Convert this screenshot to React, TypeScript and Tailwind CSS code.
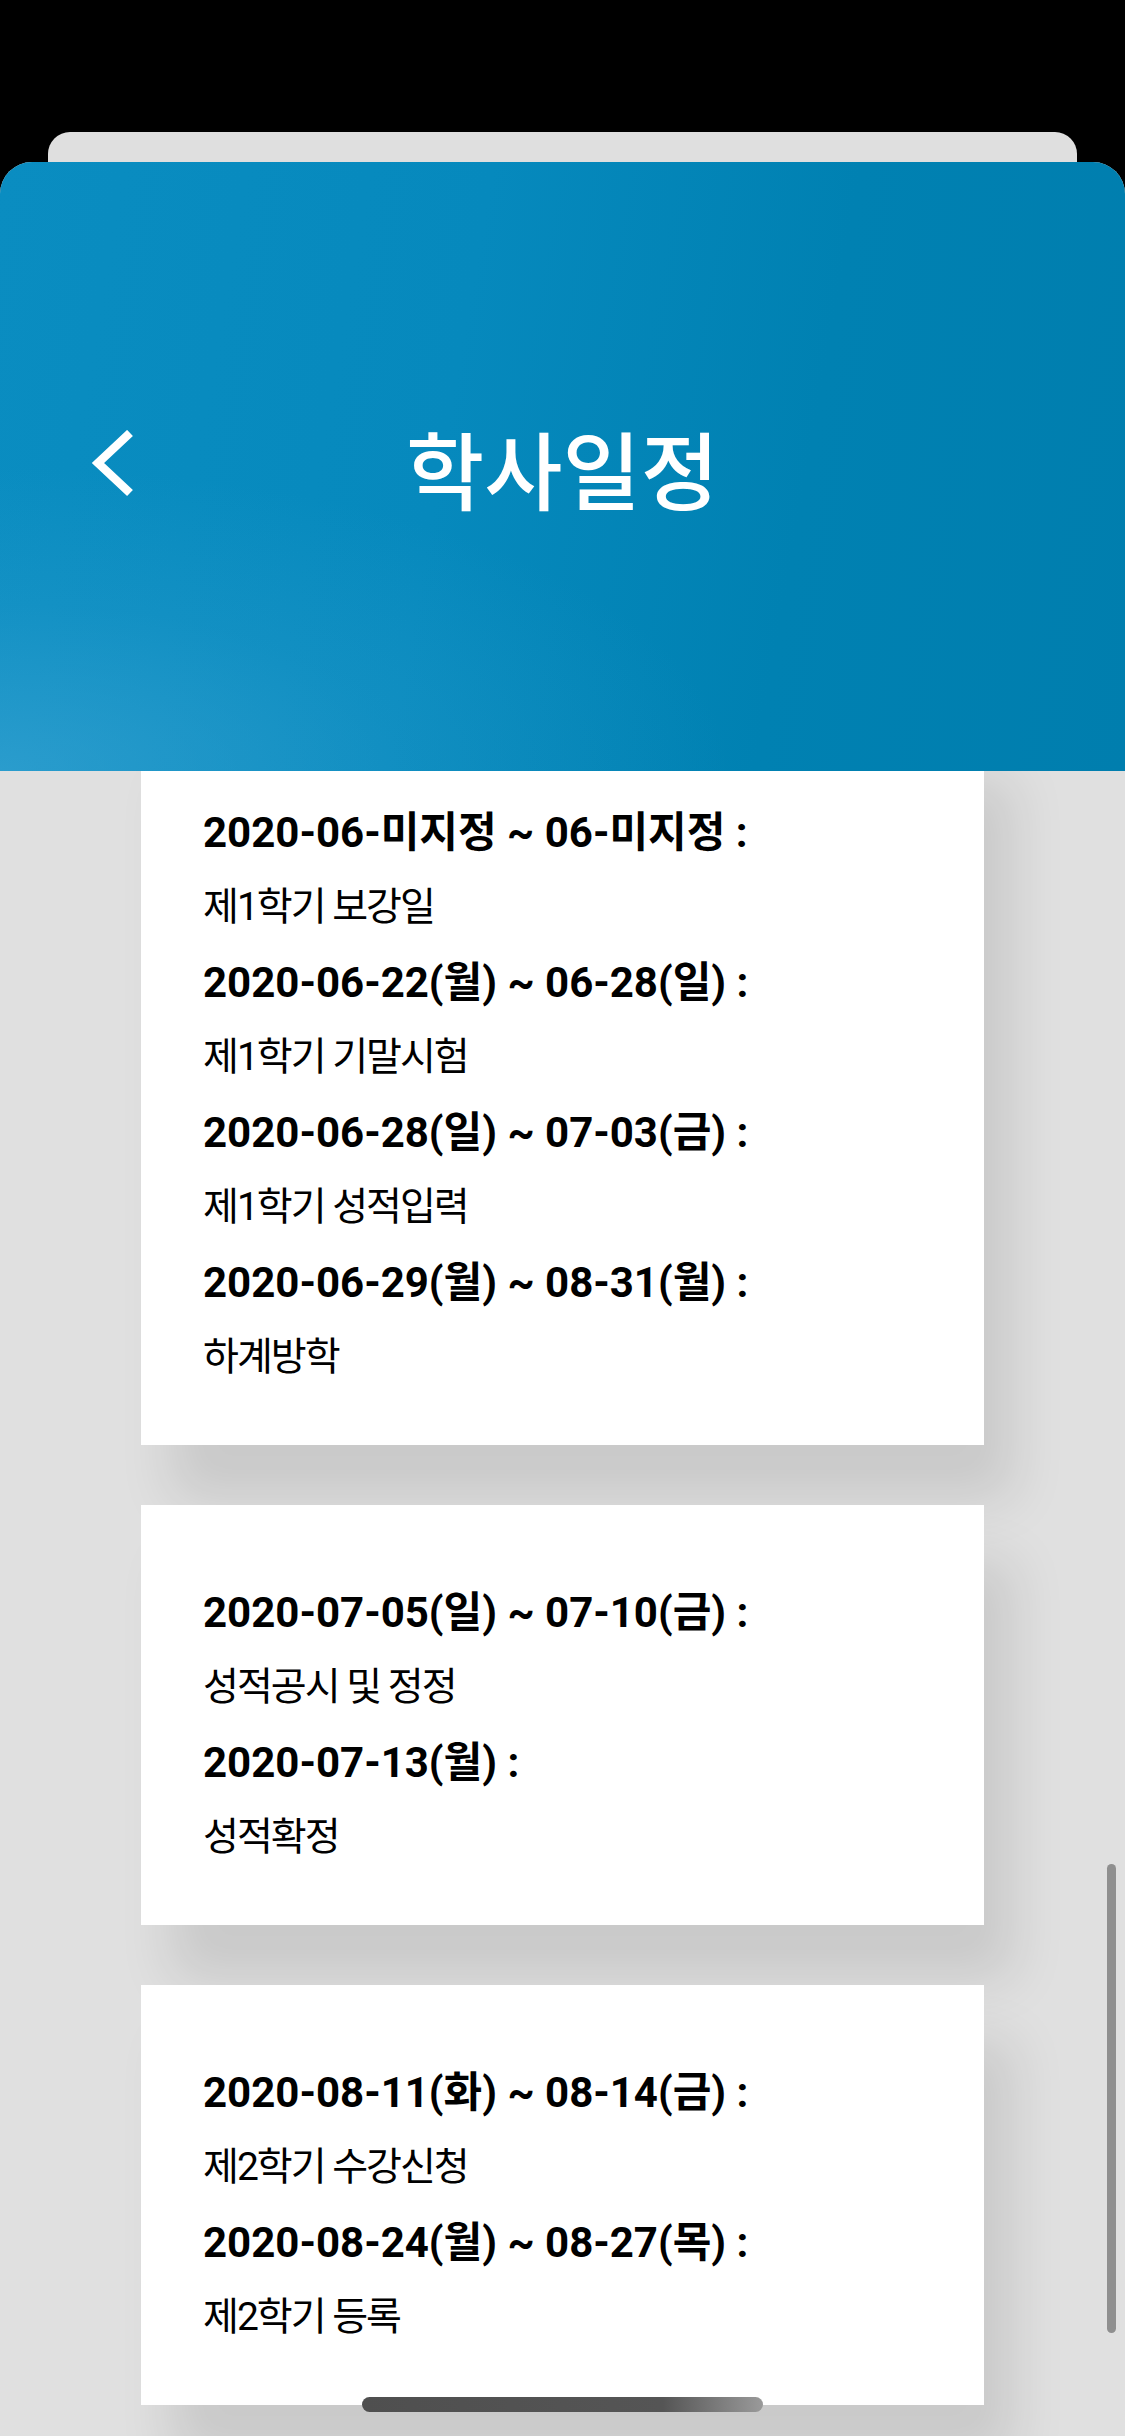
import React from 'react';

type Item = { date: string; title: string };

const groups: Item[][] = [
  [
    { date: '2020-06-미지정 ~ 06-미지정 :', title: '제1학기 보강일' },
    { date: '2020-06-22(월) ~ 06-28(일) :', title: '제1학기 기말시험' },
    { date: '2020-06-28(일) ~ 07-03(금) :', title: '제1학기 성적입력' },
    { date: '2020-06-29(월) ~ 08-31(월) :', title: '하계방학' },
  ],
  [
    { date: '2020-07-05(일) ~ 07-10(금) :', title: '성적공시 및 정정' },
    { date: '2020-07-13(월) :', title: '성적확정' },
  ],
  [
    { date: '2020-08-11(화) ~ 08-14(금) :', title: '제2학기 수강신청' },
    { date: '2020-08-24(월) ~ 08-27(목) :', title: '제2학기 등록' },
  ],
];

function ScheduleCard({ items }: { items: Item[] }) {
  return (
    <div className="bg-white pt-[70px] pb-[50px] pl-[62px] pr-6 shadow-[30px_55px_50px_rgba(0,0,0,0.1)]">
      {items.map((item) => (
        <div key={item.date}>
          <p className="text-[42px] leading-[75px] font-bold text-black whitespace-nowrap">
            {item.date}
          </p>
          <p className="text-[39px] leading-[75px] tracking-[-2px] text-black whitespace-nowrap">
            {item.title}
          </p>
        </div>
      ))}
    </div>
  );
}

export default function App() {
  return (
    <div
      className="relative w-[1125px] h-[2436px] overflow-hidden bg-black flex flex-col"
      style={{ fontFamily: '"Roboto", "Noto Sans CJK KR", sans-serif' }}
    >
      {/* status bar area */}
      <div className="h-[132px] shrink-0" />
      {/* sheet behind */}
      <div className="mx-[48px] h-[30px] shrink-0 rounded-t-[22px] bg-[#dfdfdf]" />

      {/* modal sheet */}
      <div className="flex-1 flex flex-col rounded-t-[32px] overflow-hidden bg-[#e0e0e0]">
        {/* Header */}
        <header className="relative h-[609px] shrink-0 bg-[linear-gradient(100deg,#0a8dc1_0%,#0689bd_40%,#0081b2_70%,#007eae_100%)]">
          <div className="absolute inset-0 bg-[radial-gradient(ellipse_65%_50%_at_0%_100%,rgba(60,165,212,0.65)_0%,rgba(60,165,212,0.2)_55%,rgba(60,165,212,0)_100%)]" />
          <div className="relative h-full grid grid-cols-[1fr_auto_1fr] items-center">
            <div className="pl-[88px]">
              <svg width="50" height="70" viewBox="0 0 50 70" fill="none" className="mt-[-4px]">
                <path d="M42 3 L10 33 L42 63" stroke="white" strokeWidth="8.5" strokeLinejoin="miter" />
              </svg>
            </div>
            <h1
              className="text-[85px] font-medium text-white leading-none"
              style={{ fontFamily: '"Noto Sans CJK KR", sans-serif' }}
            >
              학사일정
            </h1>
            <div />
          </div>
        </header>

        {/* Content */}
        <main className="flex-1 overflow-hidden">
          <div className="-mt-[46px] px-[141px] flex flex-col gap-[60px]">
            {groups.map((items, i) => (
              <ScheduleCard key={i} items={items} />
            ))}
          </div>
        </main>
      </div>

      {/* scroll indicator */}
      <div className="absolute left-[1107px] top-[1864px] w-[9px] h-[469px] rounded-full bg-[#8f8f8f]" />
      {/* home indicator */}
      <div className="absolute left-[362px] top-[2397px] w-[401px] h-[15px] rounded-full bg-[linear-gradient(to_right,#4f4f4f_0%,#555555_75%,#9a9a9a_100%)]" />
    </div>
  );
}
